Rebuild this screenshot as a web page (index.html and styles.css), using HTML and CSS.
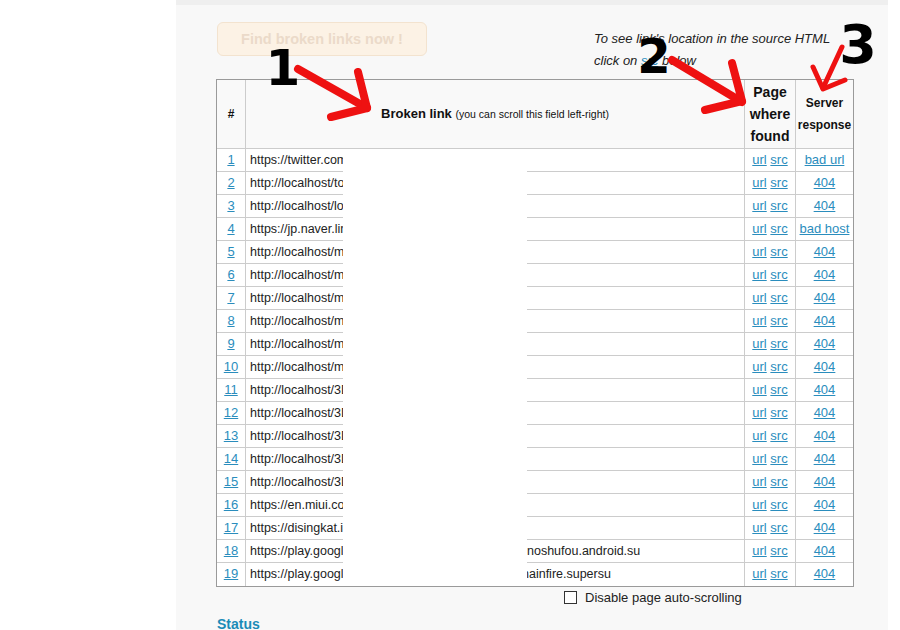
FILE: index.html
```html
<!DOCTYPE html>
<html>
<head>
<meta charset="utf-8">
<title>Broken links</title>
<link rel="stylesheet" href="styles.css">
</head>
<body>
<div class="panel">
  <div class="top">
    <button class="find" disabled>Find broken links now !</button>
    <div class="hint">To see link's location in the source HTML<br>click on <a class="lnk">src</a> below</div>
  </div>
  <div class="tablewrap">
    <table class="res">
      <thead>
        <tr>
          <th class="c-num">#</th>
          <th class="c-link"><b>Broken link</b> <span class="small">(you can scroll this field left-right)</span></th>
          <th class="c-page">Page where found</th>
          <th class="c-resp">Server response</th>
        </tr>
      </thead>
      <tbody>
        <tr><td class="c-num"><a class="lnk">1</a></td><td class="c-link"><span class="head">https://twitter.com/intent</span></td><td class="c-page"><a class="lnk">url</a> <a class="lnk">src</a></td><td class="c-resp"><a class="lnk">bad url</a></td></tr>
        <tr><td class="c-num"><a class="lnk">2</a></td><td class="c-link"><span class="head">http://localhost/tools</span></td><td class="c-page"><a class="lnk">url</a> <a class="lnk">src</a></td><td class="c-resp"><a class="lnk">404</a></td></tr>
        <tr><td class="c-num"><a class="lnk">3</a></td><td class="c-link"><span class="head">http://localhost/load</span></td><td class="c-page"><a class="lnk">url</a> <a class="lnk">src</a></td><td class="c-resp"><a class="lnk">404</a></td></tr>
        <tr><td class="c-num"><a class="lnk">4</a></td><td class="c-link"><span class="head">https://jp.naver.line</span></td><td class="c-page"><a class="lnk">url</a> <a class="lnk">src</a></td><td class="c-resp"><a class="lnk">bad host</a></td></tr>
        <tr><td class="c-num"><a class="lnk">5</a></td><td class="c-link"><span class="head">http://localhost/main</span></td><td class="c-page"><a class="lnk">url</a> <a class="lnk">src</a></td><td class="c-resp"><a class="lnk">404</a></td></tr>
        <tr><td class="c-num"><a class="lnk">6</a></td><td class="c-link"><span class="head">http://localhost/main</span></td><td class="c-page"><a class="lnk">url</a> <a class="lnk">src</a></td><td class="c-resp"><a class="lnk">404</a></td></tr>
        <tr><td class="c-num"><a class="lnk">7</a></td><td class="c-link"><span class="head">http://localhost/main</span></td><td class="c-page"><a class="lnk">url</a> <a class="lnk">src</a></td><td class="c-resp"><a class="lnk">404</a></td></tr>
        <tr><td class="c-num"><a class="lnk">8</a></td><td class="c-link"><span class="head">http://localhost/main</span></td><td class="c-page"><a class="lnk">url</a> <a class="lnk">src</a></td><td class="c-resp"><a class="lnk">404</a></td></tr>
        <tr><td class="c-num"><a class="lnk">9</a></td><td class="c-link"><span class="head">http://localhost/main</span></td><td class="c-page"><a class="lnk">url</a> <a class="lnk">src</a></td><td class="c-resp"><a class="lnk">404</a></td></tr>
        <tr><td class="c-num"><a class="lnk">10</a></td><td class="c-link"><span class="head">http://localhost/main</span></td><td class="c-page"><a class="lnk">url</a> <a class="lnk">src</a></td><td class="c-resp"><a class="lnk">404</a></td></tr>
        <tr><td class="c-num"><a class="lnk">11</a></td><td class="c-link"><span class="head">http://localhost/3Dmodel</span></td><td class="c-page"><a class="lnk">url</a> <a class="lnk">src</a></td><td class="c-resp"><a class="lnk">404</a></td></tr>
        <tr><td class="c-num"><a class="lnk">12</a></td><td class="c-link"><span class="head">http://localhost/3Dmodel</span></td><td class="c-page"><a class="lnk">url</a> <a class="lnk">src</a></td><td class="c-resp"><a class="lnk">404</a></td></tr>
        <tr><td class="c-num"><a class="lnk">13</a></td><td class="c-link"><span class="head">http://localhost/3Dmodel</span></td><td class="c-page"><a class="lnk">url</a> <a class="lnk">src</a></td><td class="c-resp"><a class="lnk">404</a></td></tr>
        <tr><td class="c-num"><a class="lnk">14</a></td><td class="c-link"><span class="head">http://localhost/3Dmodel</span></td><td class="c-page"><a class="lnk">url</a> <a class="lnk">src</a></td><td class="c-resp"><a class="lnk">404</a></td></tr>
        <tr><td class="c-num"><a class="lnk">15</a></td><td class="c-link"><span class="head">http://localhost/3Dmodel</span></td><td class="c-page"><a class="lnk">url</a> <a class="lnk">src</a></td><td class="c-resp"><a class="lnk">404</a></td></tr>
        <tr><td class="c-num"><a class="lnk">16</a></td><td class="c-link"><span class="head">https://en.miui.com/</span></td><td class="c-page"><a class="lnk">url</a> <a class="lnk">src</a></td><td class="c-resp"><a class="lnk">404</a></td></tr>
        <tr><td class="c-num"><a class="lnk">17</a></td><td class="c-link"><span class="head">https://disingkat.in/</span></td><td class="c-page"><a class="lnk">url</a> <a class="lnk">src</a></td><td class="c-resp"><a class="lnk">404</a></td></tr>
        <tr><td class="c-num"><a class="lnk">18</a></td><td class="c-link"><span class="head">https://play.google.com</span><span class="tail">noshufou.android.su</span></td><td class="c-page"><a class="lnk">url</a> <a class="lnk">src</a></td><td class="c-resp"><a class="lnk">404</a></td></tr>
        <tr><td class="c-num"><a class="lnk">19</a></td><td class="c-link"><span class="head">https://play.google.com</span><span class="tail tail-cut">hainfire.supersu</span></td><td class="c-page"><a class="lnk">url</a> <a class="lnk">src</a></td><td class="c-resp"><a class="lnk">404</a></td></tr>
      </tbody>
    </table>
    <div class="redact"></div>
  </div>
  <label class="opts"><input type="checkbox" class="box"><span>Disable page auto-scrolling</span></label>
  <div class="status">Status</div>
</div>

<svg class="notes" viewBox="0 0 900 630" width="900" height="630">
  <g class="arrow thick">
    <line x1="298" y1="69" x2="367" y2="108"/>
    <polyline points="358,72 367,108 331,117"/>
  </g>
  <g class="arrow thick">
    <line x1="672" y1="60" x2="742" y2="102"/>
    <polyline points="732,63 742,101 705,110"/>
  </g>
  <g class="arrow thin">
    <line x1="842" y1="47" x2="823" y2="88"/>
    <polyline points="813,67 823,89 845,80"/>
  </g>
  <text class="digit d1" x="283" y="85">1</text>
  <text class="digit d2" x="654" y="73">2</text>
  <text class="digit d3" x="858" y="63">3</text>
</svg>
</body>
</html>
```

FILE: styles.css
```css
html, body {
  margin: 0;
  padding: 0;
  overflow: hidden;
  background: #ffffff;
  font-family: "Liberation Sans", Arial, sans-serif;
  color: #222222;
}

.panel {
  position: relative;
  margin-left: 176px;
  width: 712px;
  min-height: 630px;
  box-sizing: border-box;
  background: #f8f8f8;
  border-top: 5px solid #efefef;
  padding: 17px 0 0 40px;
}

.top {
  display: flex;
  align-items: flex-start;
  height: 57px;
}

.find {
  width: 210px;
  height: 34px;
  margin: 0 0 0 1px;
  padding: 0;
  box-sizing: border-box;
  background: #fcf2e5;
  border: 1px solid #f3e3cf;
  border-radius: 6px;
  color: #ebdac9;
  font-family: "Liberation Sans", Arial, sans-serif;
  font-weight: bold;
  font-size: 14.5px;
}

.hint {
  margin: 6px 0 0 167px;
  font-style: italic;
  font-size: 13px;
  line-height: 22px;
  color: #222222;
}

.lnk {
  color: #2a8dbd;
  text-decoration: underline;
}

.tablewrap {
  position: relative;
  width: 638px;
}

.res {
  width: 638px;
  box-sizing: border-box;
  table-layout: fixed;
  border-collapse: separate;
  border-spacing: 0;
  border: 1px solid #9a9a9a;
  background: #ffffff;
}

.res th, .res td {
  padding: 0;
  box-sizing: border-box;
  border-right: 1px solid #cccccc;
  border-bottom: 1px solid #cccccc;
}

.res tr > :last-child {
  border-right: none;
}

.res tbody tr:last-child td {
  border-bottom: none;
}

.res th {
  background: #f9f9f9;
  color: #111111;
  font-weight: bold;
  line-height: 22px;
  padding: 1px 0;
  vertical-align: middle;
  text-align: center;
}

.res th.c-num { font-size: 12px; }
.res th.c-link { font-size: 13px; font-weight: normal; }
.res th.c-link b { font-weight: bold; }
.res th.c-page { font-size: 14px; }
.res th.c-resp { font-size: 12px; }

.small {
  font-size: 10.5px;
}

.c-num { width: 29px; }
.c-link { width: 499px; }
.c-page { width: 51px; }
.c-resp { width: 57px; }

.res td {
  height: 23px;
  line-height: 22px;
  font-size: 13px;
  white-space: nowrap;
  overflow: hidden;
  vertical-align: top;
}

.res td.c-num, .res td.c-page, .res td.c-resp {
  text-align: center;
}

.res td.c-link {
  font-size: 12.5px;
  padding-left: 4px;
  color: #222222;
  text-align: left;
}

.head {
  display: inline-block;
  width: 93px;
  height: 22px;
  overflow: hidden;
  vertical-align: top;
}

.tail {
  display: inline-block;
  height: 22px;
  vertical-align: top;
  margin-left: 184px;
}

.tail-cut {
  margin-left: 179px;
}

.redact {
  position: absolute;
  left: 127px;
  top: 70px;
  width: 184px;
  height: 436px;
  background: #ffffff;
}

.opts {
  display: flex;
  align-items: center;
  gap: 8px;
  height: 17px;
  margin: 2px 0 0 348px;
  font-size: 13px;
  color: #222222;
}

.box {
  appearance: none;
  -webkit-appearance: none;
  width: 13px;
  height: 13px;
  margin: 0;
  box-sizing: border-box;
  border: 1px solid #333333;
  background: #ffffff;
}

.status {
  margin-top: 10px;
  margin-left: 1px;
  font-size: 14px;
  line-height: 16px;
  font-weight: bold;
  color: #1b8bb7;
}

.notes {
  position: absolute;
  left: 0;
  top: 0;
  width: 900px;
  height: 630px;
  pointer-events: none;
}

.arrow line, .arrow polyline {
  fill: none;
  stroke: #ee1111;
  stroke-linecap: round;
  stroke-linejoin: round;
}

.arrow.thick line, .arrow.thick polyline { stroke-width: 8; }
.arrow.thin line, .arrow.thin polyline { stroke-width: 5; }

.digit {
  font-family: "DejaVu Sans", sans-serif;
  font-weight: bold;
  fill: #000000;
  text-anchor: middle;
}

.d1 { font-size: 50px; }
.d2 { font-size: 48px; }
.d3 { font-size: 54px; }
```
